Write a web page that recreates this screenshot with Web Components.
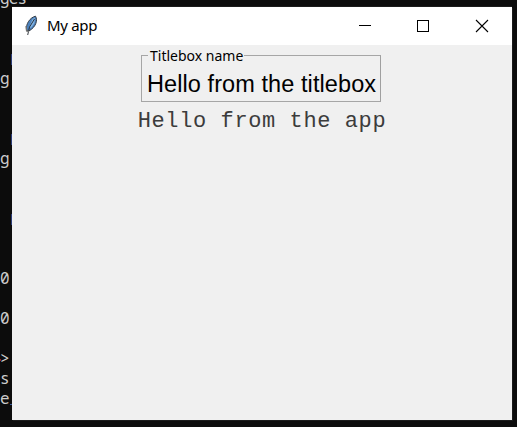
<!DOCTYPE html>
<html lang="en"><head><meta charset="utf-8"><title>My app</title>
<style>html,body{margin:0;width:517px;height:427px;overflow:hidden;background:#0c0c0c}</style></head>
<body>
<terminal-backdrop></terminal-backdrop>
<app-window>
  <title-bar slot="bar">My app</title-bar>
  <title-box label="Titlebox name">Hello from the titlebox</title-box>
  <app-text>Hello from the app</app-text>
</app-window>
<script>
const define=(name,html,setup)=>customElements.define(name,class extends HTMLElement{
  connectedCallback(){
    if(this.shadowRoot)return;
    this.attachShadow({mode:'open'}).innerHTML=html;
    if(setup)setup(this);
  }
});
define('terminal-backdrop',`<style>
:host{position:absolute;inset:0;overflow:hidden;background:#0c0c0c;color:#ccc;font:16px/20px "Noto Sans Mono","DejaVu Sans Mono",monospace}
.rows{display:grid;grid-auto-rows:20px;margin-top:-12px}
.row{width:12px;overflow:hidden;white-space:pre;letter-spacing:-.8px}
.row.first{width:60px}
.mark{width:1px;height:11px;margin:6px 0 0 11px;background:#2b3c78}
.row.prompt{position:relative}
.prompt::before{content:"";position:absolute;left:0;top:11px;width:1px;height:2px;background:#a01822}
.tail{width:2px;height:1px;margin:-4px 0 0 10px;background:#3a5a9a}
</style><div class="rows"></div>`,el=>{
  const rows=['ges','','','|','g','','','|','g','','','|','','','0','','0','','>','s','e'];
  const box=el.shadowRoot.querySelector('.rows');
  rows.forEach((t,i)=>{
    const d=document.createElement('div');
    if(t==='|')d.className='mark';
    else{d.className=i?'row':'row first';d.textContent=t;}
    if(t==='>')d.classList.add('prompt');
    box.append(d);
  });
  const tail=document.createElement('div');
  tail.className='tail';
  box.append(tail);
});
define('app-window',`<style>
:host{position:absolute;left:12px;top:7px;width:500px;height:413px;display:flex;flex-direction:column;background:#f0f0f0;box-shadow:1px 1px 0 #1b1b1b,0 -1px 0 #1b1b1b}
main{display:flex;flex-direction:column;align-items:center;padding-top:3px}
</style><slot name="bar"></slot><main><slot></slot></main>`);
define('title-bar',`<style>
:host{display:flex;height:38px;background:#fff;color:#000;font:15px/37px "Noto Sans",sans-serif;align-items:center}
.icon{margin:0 7px 0 12px;flex:none}
.name{flex:1;letter-spacing:-.3px;white-space:nowrap;margin-top:-1px}
.controls{display:grid;grid-template-columns:58px 58px 59px;height:38px}
.controls svg{display:block}
</style>
<svg class="icon" width="16" height="22" viewBox="0 0 16 22">
<path d="M2.5 15C1.6 9 6 2.5 11.5 1.2C13.8 4.8 12.4 11.6 5 16Z" fill="#4c82bd" stroke="#343b45"/>
<path d="M8.4 4.3L11 2.4L10.5 8L7.5 12.5L5 13Z" fill="#83b4e2"/>
<path d="M10.5 4L5.5 12L3.7 20" fill="none" stroke="#20262e" stroke-width=".9"/>
<path d="M2 11L2.6 16L5 16.5" fill="none" stroke="#777" stroke-width="1.3"/>
</svg>
<span class="name"><slot></slot></span>
<div class="controls">
<svg width="58" height="38"><path d="M22 18.5H34" stroke="#000" shape-rendering="crispEdges"/></svg>
<svg width="58" height="38"><path d="M22.5 13.5h11v11h-11z" fill="none" stroke="#000" shape-rendering="crispEdges"/></svg>
<svg width="59" height="38"><path d="M23 13L35 25M35 13L23 25" stroke="#000" stroke-width="1.1"/></svg>
</div>`);
define('title-box',`<style>
:host{display:block;width:240px;height:54px;margin-right:2px;color:#000}
fieldset{box-sizing:border-box;width:240px;height:54px;margin:0;padding:0 0 0 5px;min-width:0;border:1px solid #a6a6a6;border-right-color:#a0a0a0}
legend{height:15px;margin:0 0 0 1px;padding:0 1px 0 2px;font:14px/16px "Noto Sans",sans-serif;white-space:nowrap}
p{margin:7px 0 0;font:23.5px/28px "Liberation Sans",sans-serif;letter-spacing:.08px;white-space:nowrap}
</style><fieldset><legend></legend><p><slot></slot></p></fieldset>`,el=>{
  el.shadowRoot.querySelector('legend').textContent=el.getAttribute('label');
});
define('app-text',`<style>
:host{display:block;margin-top:7px;color:#3c3c3c;font:22px/26px "Liberation Mono",monospace;letter-spacing:.6px;white-space:nowrap}
</style><slot></slot>`);
</script></body></html>
